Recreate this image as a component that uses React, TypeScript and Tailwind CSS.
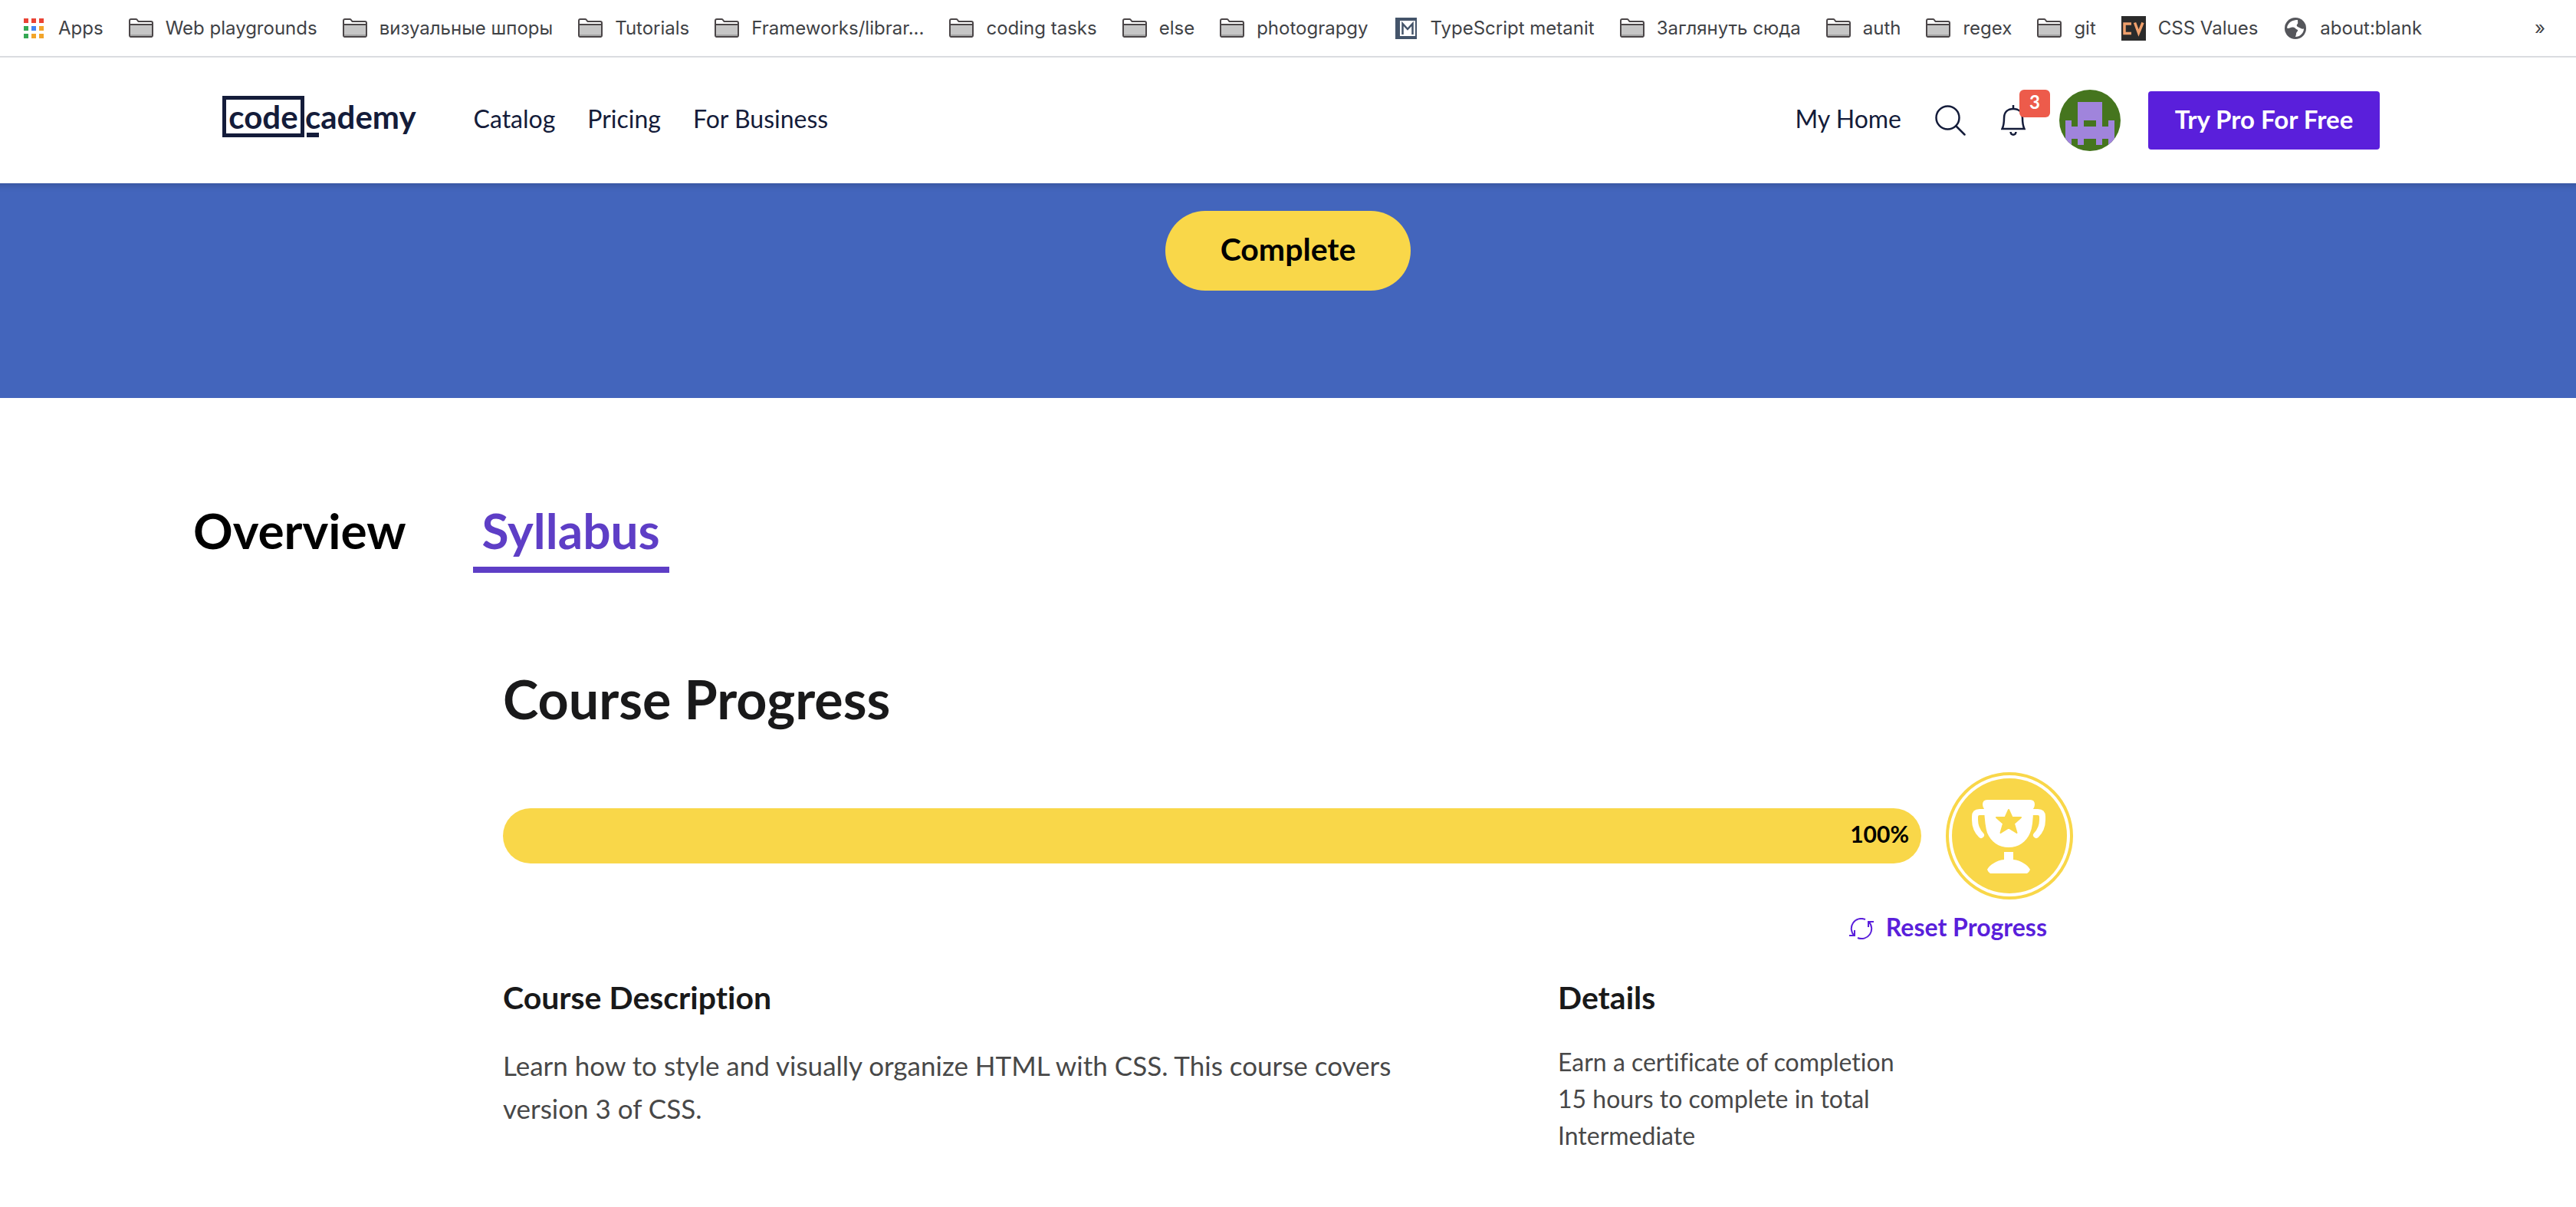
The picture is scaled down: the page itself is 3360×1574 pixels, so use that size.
import type { ReactNode } from 'react';

type BookmarkKind = 'apps' | 'folder' | 'metanit' | 'cssvalues' | 'globe';

const bookmarks: { label: string; kind: BookmarkKind }[] = [
  { label: 'Apps', kind: 'apps' },
  { label: 'Web playgrounds', kind: 'folder' },
  { label: 'визуальные шпоры', kind: 'folder' },
  { label: 'Tutorials', kind: 'folder' },
  { label: 'Frameworks/librar...', kind: 'folder' },
  { label: 'coding tasks', kind: 'folder' },
  { label: 'else', kind: 'folder' },
  { label: 'photograpgy', kind: 'folder' },
  { label: 'TypeScript metanit', kind: 'metanit' },
  { label: 'Заглянуть сюда', kind: 'folder' },
  { label: 'auth', kind: 'folder' },
  { label: 'regex', kind: 'folder' },
  { label: 'git', kind: 'folder' },
  { label: 'CSS Values', kind: 'cssvalues' },
  { label: 'about:blank', kind: 'globe' },
];

const appDots = ['#ea4335', '#ea4335', '#ea4335', '#34a853', '#4285f4', '#f2a52b', '#34a853', '#f2a52b', '#f2a52b'];

function BookmarkIcon({ kind }: { kind: BookmarkKind }) {
  if (kind === 'apps') {
    return (
      <svg className="h-[26px] w-[26px]" viewBox="0 0 26 26" aria-hidden="true">
        {appDots.map((fill, i) => (
          <rect key={i} x={(i % 3) * 10} y={Math.floor(i / 3) * 10} width="6" height="6" fill={fill} />
        ))}
      </svg>
    );
  }
  if (kind === 'folder') {
    return (
      <svg className="h-[26px] w-8" viewBox="0 0 32 26" aria-hidden="true">
        <path d="M1 22V3Q1 1 3 1H9.500Q10.500 1 11 2L12.500 4H29Q31 4 31 6V22Q31 24 29 24H3Q1 24 1 22Z" fill="#fff" stroke="#4b4648" strokeWidth="2" />
        <rect x="2" y="8" width="28" height="15" fill="#c6c6c6" />
        <rect x="2" y="21" width="28" height="2" fill="#a5a5a5" />
        <path d="M1 8H31M2 24H30" stroke="#4b4648" strokeWidth="2" />
      </svg>
    );
  }
  if (kind === 'metanit') {
    return (
      <svg className="h-7 w-7" viewBox="0 0 28 28" aria-hidden="true">
        <rect width="28" height="28" fill="#44546a" />
        <rect x="6" y="4" width="20" height="20" fill="#fff" />
        <path d="M9.500 22V8L16 15L22.500 8V22" fill="none" stroke="#44546a" strokeWidth="2.500" />
      </svg>
    );
  }
  if (kind === 'cssvalues') {
    return (
      <svg className="h-8 w-8" viewBox="0 0 32 32" aria-hidden="true">
        <rect width="32" height="32" fill="#2b2b2b" />
        <path d="M13 10H4V22.500H13M17.500 8.500L22.500 22L28 8.500" fill="none" stroke="#f0a06c" strokeWidth="3.500" />
      </svg>
    );
  }
  return (
    <svg className="h-7 w-7" viewBox="0 0 28 28" aria-hidden="true">
      <circle cx="14" cy="14" r="14" fill="#55565b" />
      <path d="M17 3C11 3 6 5 3.500 11C3 13 3 14 4 14C7 14 8 12 11 12.500C14 13 14 15 17 16C18 17 15 19 15 21C15 23 14 24 14 25C20 25 25 20 25 14.500C22 15 21 14 19 13C17 12 15 11 16 9C18 8 17 6 17 3Z" fill="#fff" />
    </svg>
  );
}

function Logo() {
  return (
    <a href="#" aria-label="codecademy" className="flex h-[54px] items-stretch text-[42px] leading-[54px] font-bold text-[#141c3a]">
      <span className="flex w-[107px] items-center justify-center border-5 border-[#141c3a]">code</span>
      <span className="relative pl-px">
        cademy
        <span className="absolute bottom-0 left-[3px] h-1.5 w-4 bg-[#141c3a]" />
      </span>
    </a>
  );
}

function NavLink({ children }: { children: ReactNode }) {
  return (
    <a href="#" className="pb-1 text-[32px] leading-10 text-[#141c3a]">
      {children}
    </a>
  );
}

function Avatar() {
  return (
    <svg className="h-20 w-20 rounded-full" viewBox="0 0 80 80" role="img" aria-label="Profile">
      <rect width="80" height="80" fill="#45751e" />
      <path
        d="M24 16H56V48H64V40H72V72H64V64H56V72H48V64H32V72H24V64H16V72H8V40H16V48H24ZM32 40V48H48V40Z"
        fill="#a084dc"
        fillRule="evenodd"
      />
    </svg>
  );
}

function Trophy() {
  return (
    <svg className="h-[166px] w-[166px] shrink-0" viewBox="0 0 166 166" role="img" aria-label="Course completed">
      <circle cx="83" cy="83" r="81" fill="#fff" stroke="#f9d749" strokeWidth="4" />
      <circle cx="83" cy="83" r="75" fill="#f9d749" />
      <path d="M54 36H110Q116 36 116 42Q116 45 114 48Q114 70 110 79C105 91 95 98 82 98C69 98 59 91 54 79Q51 70 50 48Q48 45 48 42Q48 36 54 36Z" fill="#fff" />
      <path d="M52 52H44Q38 52 38 58V62C38 70 41 77 46 82M112 52H120Q126 52 126 58V62C126 70 123 77 118 82" fill="none" stroke="#fff" strokeWidth="8" strokeLinecap="round" />
      <path d="M76 104H88V114C98 115 107 121 110 127Q109 130 106 132H58Q55 130 54 127C57 121 66 115 76 114Z" fill="#fff" />
      <path d="M82 49L86.500 59H98L89 67L92.500 79L82 72.500L71.500 79L75 67L66 59H77.500Z" fill="#f9d749" stroke="#f9d749" strokeWidth="2" strokeLinejoin="round" />
    </svg>
  );
}

function ResetIcon() {
  return (
    <svg className="mt-1 h-7 w-8" viewBox="0 0 32 28" fill="none" stroke="#5a1fdb" strokeWidth="2" aria-hidden="true">
      <path d="M21 2A13 13 0 0 0 6.500 23" />
      <path d="M11 26A13 13 0 0 0 25.500 5" />
      <path d="M0 23H7V16M32 5H25V12" />
    </svg>
  );
}

export default function App() {
  return (
    <div className="min-h-screen bg-white font-['Lato',sans-serif] [font-variant-ligatures:no-common-ligatures]">
      <nav aria-label="Bookmarks" className="flex h-[75px] items-center justify-between border-b-2 border-[#dadce0] pr-10 pl-7 font-['Inter',sans-serif] text-2xl text-[#3f4246]">
        <ul className="flex items-center gap-[33px]">
          {bookmarks.map((b) => (
            <li key={b.label}>
              <a href="#" className="flex items-center gap-4 whitespace-nowrap">
                <span className="flex w-8 justify-center">
                  <BookmarkIcon kind={b.kind} />
                </span>
                {b.label}
              </a>
            </li>
          ))}
        </ul>
        <button type="button" aria-label="More bookmarks">»</button>
      </nav>

      <header className="flex h-[164px] items-center justify-between bg-white pr-[256px] pl-[290px]">
        <div className="flex items-center">
          <div className="pb-2.5">
            <Logo />
          </div>
          <nav aria-label="Main" className="ml-[75px] flex items-center gap-[42px]">
            <NavLink>Catalog</NavLink>
            <NavLink>Pricing</NavLink>
            <NavLink>For Business</NavLink>
          </nav>
        </div>
        <div className="flex items-center">
          <NavLink>My Home</NavLink>
          <button type="button" aria-label="Search" className="ml-11">
            <svg className="h-10 w-10" viewBox="0 0 40 40" fill="none" stroke="#141c3a" strokeWidth="2.500" strokeLinecap="round">
              <circle cx="16.500" cy="16.500" r="15" />
              <path d="M27.500 27.500L38.500 38.500" />
            </svg>
          </button>
          <button type="button" aria-label="Notifications" className="relative ml-[46px]">
            <svg className="h-10 w-8" viewBox="0 0 32 40" fill="none" stroke="#141c3a" strokeWidth="2.500">
              <path d="M1.500 31C3.500 27 4 23 4 17C4 9 9 5 16 5C23 5 28 9 28 17C28 23 28.500 27 30.500 31Z" />
              <path d="M16 0V5M12.500 35C13 40 19 40 19.500 35" />
            </svg>
            <span className="absolute -top-5 left-6 h-9 w-10 rounded-md bg-[#ed5b4b] text-2xl leading-8 font-bold text-white">3</span>
          </button>
          <button type="button" aria-label="Account" className="ml-11">
            <Avatar />
          </button>
          <button type="button" className="ml-9 h-[76px] w-[302px] rounded bg-[#5a1fdb] pb-1 text-[33px] leading-10 font-bold text-white">
            Try Pro For Free
          </button>
        </div>
      </header>

      <section className="flex h-[280px] justify-center bg-[#4365bc] pt-9 shadow-[inset_0_12px_10px_-10px_rgba(0,0,0,0.2)]">
        <button type="button" className="h-[104px] w-80 rounded-full bg-[#f9d749] pb-1 text-[41px] leading-12 font-bold text-black">
          Complete
        </button>
      </section>

      <nav aria-label="Course" className="mt-[133px] flex gap-[75px] pl-[240px] text-[64px] leading-20 font-bold">
        <a href="#" className="px-3 pb-[7px] text-black">Overview</a>
        <a href="#" aria-current="page" className="border-b-8 border-[#5e3ec6] px-3 pb-[7px] text-[#5e3ec6]">Syllabus</a>
      </nav>

      <main className="mx-auto mt-[124px] max-w-[2048px] text-[#484848]">
        <h1 className="text-[70px] leading-20 font-bold text-[#19191a]">Course Progress</h1>
        <div className="mt-14 flex items-center gap-8">
          <div role="progressbar" aria-label="Course progress" aria-valuenow={100} aria-valuemin={0} aria-valuemax={100} className="flex h-[72px] grow items-center justify-end rounded-full bg-[#f9d749] pr-4 pb-1.5 text-[30px] leading-10 font-bold text-black">
            100%
          </div>
          <Trophy />
        </div>
        <div className="mt-4 flex justify-end pr-[34px]">
          <button type="button" className="flex items-center gap-4 text-[32px] leading-10 font-bold text-[#5a1fdb]">
            <ResetIcon />
            Reset Progress
          </button>
        </div>
        <div className="mt-12 grid grid-cols-[43fr_21fr]">
          <section>
            <h2 className="text-[41px] leading-12 font-bold text-[#19191a]">Course Description</h2>
            <p className="mt-9 max-w-[1200px] text-[35px] leading-14">
              Learn how to style and visually organize HTML with CSS. This course covers version 3 of CSS.
            </p>
          </section>
          <section>
            <h2 className="text-[41px] leading-12 font-bold text-[#19191a]">Details</h2>
            <ul className="mt-9 text-[32px] leading-12">
              <li>Earn a certificate of completion</li>
              <li>15 hours to complete in total</li>
              <li>Intermediate</li>
            </ul>
          </section>
        </div>
      </main>
    </div>
  );
}
